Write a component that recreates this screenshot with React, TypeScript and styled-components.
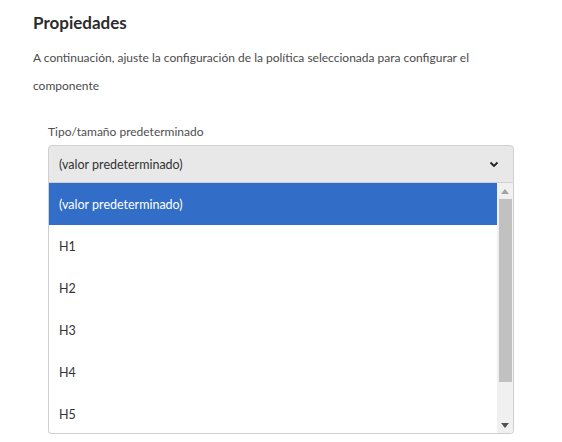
import React from "react";
import styled, { createGlobalStyle } from "styled-components";

const GlobalStyle = createGlobalStyle`
  html, body { margin: 0; padding: 0; background: #ffffff; }
  body { font-family: Lato, "Open Sans", sans-serif; color: #4b4b4b; }
`;

const Page = styled.div`
  padding: 12px 0 0 33px;
  width: 480px;
`;

const Title = styled.h2`
  margin: 0;
  font-size: 17px;
  line-height: 22px;
  font-weight: 700;
  color: #2c2c2c;
`;

const Intro = styled.p`
  margin: 10px 0 0;
  font-size: 12px;
  line-height: 28px;
  color: #4b4b4b;
`;

const Field = styled.div`
  margin: 24px 0 0 15px;
  width: 466px;
  display: flex;
  flex-direction: column;
`;

const Label = styled.label`
  font-size: 12px;
  line-height: 16px;
  color: #4e4e4e;
  margin-bottom: 5px;
`;

const SelectButton = styled.div`
  box-sizing: border-box;
  height: 38px;
  display: flex;
  align-items: center;
  justify-content: space-between;
  padding: 0 14px 0 10px;
  background: #e8e8e8;
  border: 1px solid #d0d0d0;
  border-radius: 4px 4px 0 0;
  font-size: 12.5px;
  color: #333333;
`;

const ListBox = styled.div`
  box-sizing: border-box;
  height: 251px;
  display: flex;
  border: 1px solid #d0d0d0;
  border-top: none;
  border-radius: 0 0 4px 4px;
  background: #ffffff;
  overflow: hidden;
`;

const Options = styled.ul`
  list-style: none;
  margin: 0;
  padding: 0;
  flex: 1;
  overflow: hidden;
`;

const Option = styled.li<{ $selected?: boolean }>`
  flex-shrink: 0;
  height: 42px;
  display: flex;
  align-items: center;
  padding-left: 10px;
  font-size: 12.5px;
  background: ${(p) => (p.$selected ? "#326ec8" : "transparent")};
  color: ${(p) => (p.$selected ? "#ffffff" : "#333333")};
`;

const ScrollBar = styled.div`
  width: 16px;
  background: #f0f0f0;
  display: flex;
  flex-direction: column;
`;

const ScrollButton = styled.div`
  height: 16px;
  display: flex;
  align-items: center;
  justify-content: center;
`;

const Track = styled.div`
  flex: 1;
  display: flex;
  justify-content: center;
`;

const Thumb = styled.div`
  width: 13px;
  height: 183px;
  background: #c1c1c1;
`;

const Chevron = () => (
  <svg width="10" height="7" viewBox="0 0 10 7">
    <path d="M1.5 1.5 L5 5 L8.5 1.5" fill="none" stroke="#222" strokeWidth="1.8" />
  </svg>
);

const Arrow = ({ up, color }: { up?: boolean; color: string }) => (
  <svg width="8" height="5" viewBox="0 0 8 5">
    <path d={up ? "M0 5 L4 0 L8 5 Z" : "M0 0 L8 0 L4 5 Z"} fill={color} />
  </svg>
);

const options = ["(valor predeterminado)", "H1", "H2", "H3", "H4", "H5"];

export default function App() {
  return (
    <>
      <GlobalStyle />
      <Page>
        <Title>Propiedades</Title>
        <Intro>
          A continuación, ajuste la configuración de la política seleccionada para configurar el componente
        </Intro>
        <Field>
          <Label>Tipo/tamaño predeterminado</Label>
          <SelectButton>
            <span>(valor predeterminado)</span>
            <Chevron />
          </SelectButton>
          <ListBox>
            <Options>
              {options.map((o, i) => (
                <Option key={o} $selected={i === 0}>
                  {o}
                </Option>
              ))}
            </Options>
            <ScrollBar>
              <ScrollButton>
                <Arrow up color="#a3a3a3" />
              </ScrollButton>
              <Track>
                <Thumb />
              </Track>
              <ScrollButton>
                <Arrow color="#505050" />
              </ScrollButton>
            </ScrollBar>
          </ListBox>
        </Field>
      </Page>
    </>
  );
}
